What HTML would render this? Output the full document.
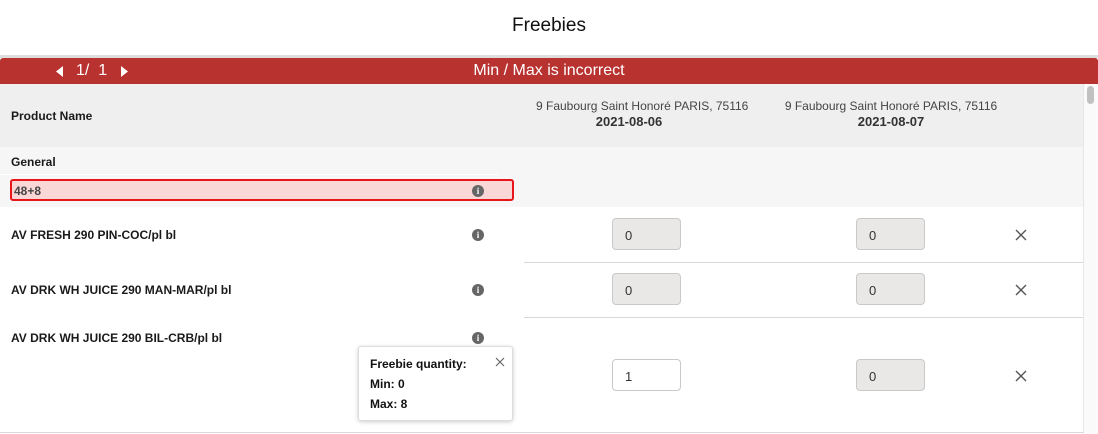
<!DOCTYPE html>
<html><head><style>
*{margin:0;padding:0;box-sizing:border-box}
body{width:1098px;height:434px;overflow:hidden;background:#fff;font-family:"Liberation Sans",Arial,sans-serif;position:relative;color:#222}
.a{position:absolute}
.b{font-weight:bold;font-size:12px;color:#1a1a1a}
.inp{position:absolute;width:69px;height:32px;border:1px solid #c9c9c9;border-radius:4px;background:#e9e8e6;font-size:13px;padding:9px 0 0 12px;color:#333}
.x{position:absolute}
.info{position:absolute;width:12px;height:12px;border-radius:50%;background:#666;color:#fff;font-size:9px;font-weight:bold;text-align:center;line-height:12px;font-family:"Liberation Serif",serif}
.hl{position:absolute;height:1px;background:#d8d8d8}
.addr{position:absolute;white-space:nowrap;text-align:center;font-size:12px;color:#444;line-height:15px}
</style></head><body>
<div class="a" style="left:0;top:0;width:1098px;height:55px;text-align:center;font-size:19px;line-height:52px;color:#111">Freebies</div>
<div class="a" style="left:0;top:55px;width:1098px;height:3px;background:#ddd"></div>
<div class="a" style="left:0;top:58px;width:1098px;height:26px;background:#b83230;border-radius:3px 3px 0 0"></div>
<svg class="a" style="left:56px;top:66px" width="8" height="11"><path d="M7 0L0 5.5L7 11Z" fill="#fff"/></svg>
<div class="a" style="left:76px;top:58px;color:#fff;font-size:16px;line-height:26px">1/&nbsp; 1</div>
<svg class="a" style="left:121px;top:66px" width="8" height="11"><path d="M0 0L7 5.5L0 11Z" fill="#fff"/></svg>
<div class="a" style="left:0;top:58px;width:1098px;text-align:center;color:#fff;font-size:16px;line-height:26px">Min / Max is incorrect</div>
<div class="a" style="left:0;top:84px;width:1083px;height:63px;background:#efefef"></div>
<div class="a b" style="left:11px;top:109px">Product Name</div>
<div class="addr" style="left:536px;top:99px;width:186px">9 Faubourg Saint Honoré PARIS, 75116<br><b style="font-size:13px;color:#333">2021-08-06</b></div>
<div class="addr" style="left:780px;top:99px;width:222px">9 Faubourg Saint Honoré PARIS, 75116<br><b style="font-size:13px;color:#333">2021-08-07</b></div>
<div class="a" style="left:0;top:147px;width:1083px;height:60px;background:#f6f6f6"></div>
<div class="a b" style="left:11px;top:155px">General</div>
<div class="a" style="left:0;top:174px;width:498px;height:1px;background:#fff"></div>
<div class="a" style="left:10px;top:179px;width:504px;height:22px;background:#fad7d7;border:2px solid #e8151b;border-radius:3px;font-size:12px;font-weight:bold;color:#444;padding:3px 0 0 2px">48+8</div>
<div class="info" style="left:472px;top:185px">i</div>
<div class="a b" style="left:11px;top:228px">AV FRESH 290 PIN-COC/pl bl</div>
<div class="info" style="left:472px;top:229px">i</div>
<div class="inp" style="left:612px;top:218px">0</div>
<div class="inp" style="left:856px;top:218px">0</div>
<svg class="x" style="left:1015px;top:229px" width="12" height="12"><path d="M1 1L11 11M11 1L1 11" stroke="#555" stroke-width="1.4"/></svg>
<div class="hl" style="left:524px;top:262px;width:559px"></div>
<div class="a b" style="left:11px;top:283px">AV DRK WH JUICE 290 MAN-MAR/pl bl</div>
<div class="info" style="left:472px;top:284px">i</div>
<div class="inp" style="left:612px;top:273px">0</div>
<div class="inp" style="left:856px;top:273px">0</div>
<svg class="x" style="left:1015px;top:284px" width="12" height="12"><path d="M1 1L11 11M11 1L1 11" stroke="#555" stroke-width="1.4"/></svg>
<div class="hl" style="left:524px;top:317px;width:559px"></div>
<div class="a b" style="left:11px;top:331px">AV DRK WH JUICE 290 BIL-CRB/pl bl</div>
<div class="info" style="left:472px;top:332px">i</div>
<div class="inp" style="left:612px;top:359px;background:#fff">1</div>
<div class="inp" style="left:856px;top:359px">0</div>
<svg class="x" style="left:1015px;top:370px" width="12" height="12"><path d="M1 1L11 11M11 1L1 11" stroke="#555" stroke-width="1.4"/></svg>
<div class="hl" style="left:0;top:432px;width:1083px"></div>
<div class="a" style="left:358px;top:346px;width:155px;height:75px;background:#fff;border:1px solid #ddd;border-radius:3px;box-shadow:0 1px 4px rgba(0,0,0,.2);font-size:12px;font-weight:bold;line-height:20px;padding:7px 0 0 11px;color:#111">Freebie quantity:<br>Min: 0<br>Max: 8</div>
<svg class="x" style="left:495px;top:357px" width="10" height="10"><path d="M1 1L9 9M9 1L1 9" stroke="#666" stroke-width="1.2"/></svg>
<div class="a" style="left:1083px;top:84px;width:15px;height:350px;background:#fafafa;border-left:1px solid #e6e6e6"></div>
<div class="a" style="left:1087px;top:86px;width:7px;height:18px;background:#c1c1c1;border-radius:4px"></div>
</body></html>
